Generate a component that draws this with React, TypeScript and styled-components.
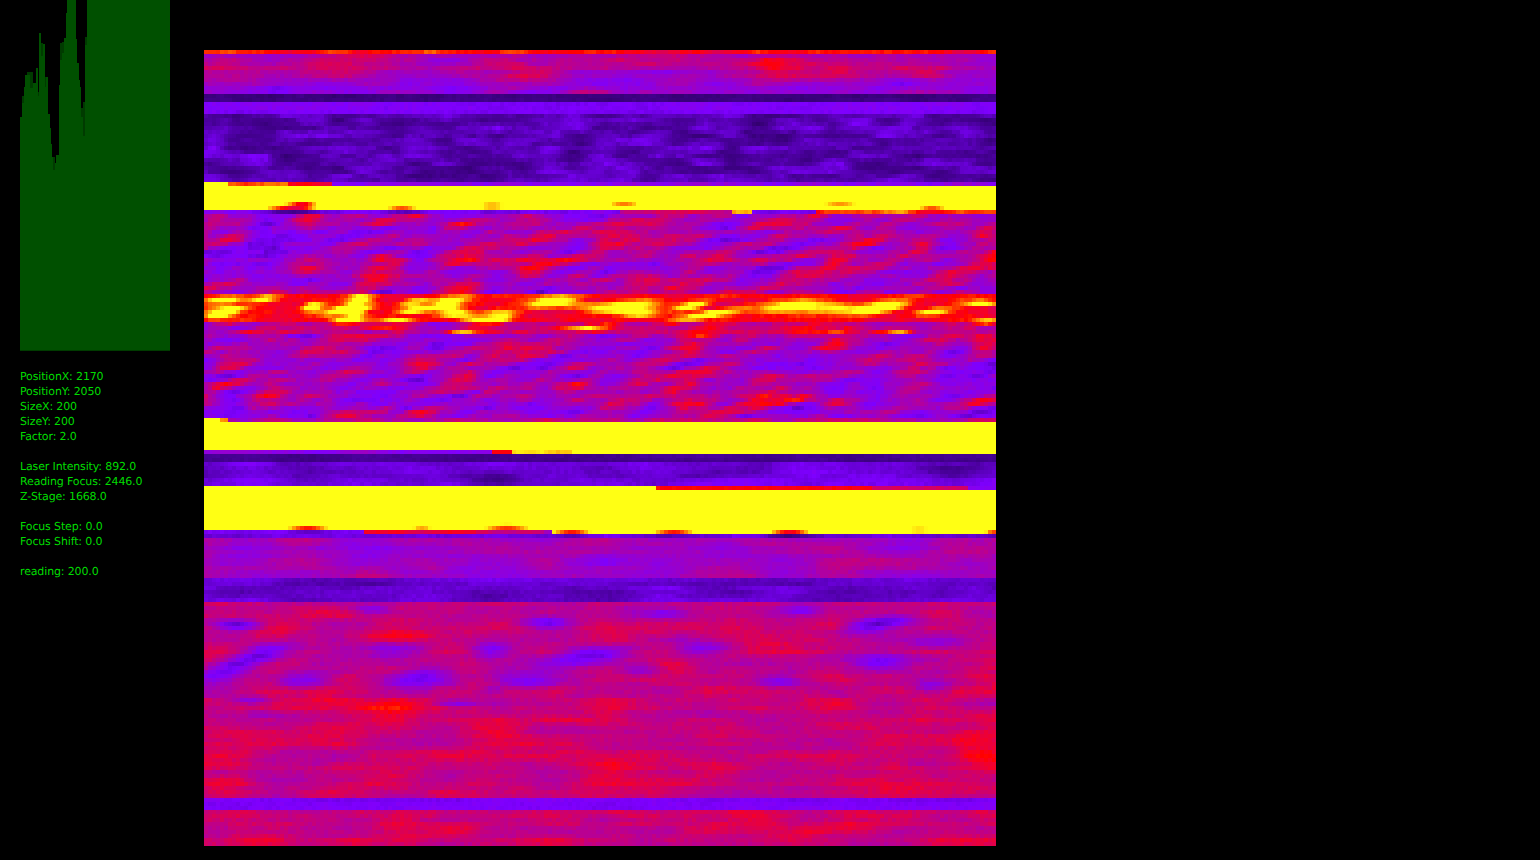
import React, { useEffect, useRef } from 'react';
import styled, { createGlobalStyle } from 'styled-components';

const GlobalStyle = createGlobalStyle`
  html, body {
    margin: 0;
    padding: 0;
    background: #000;
  }
`;

const Page = styled.div`
  display: flex;
  align-items: flex-start;
  width: 1540px;
  height: 860px;
  overflow: hidden;
  background: #000;
  padding-left: 20px;
  box-sizing: border-box;
`;

const SidePanel = styled.div`
  display: flex;
  flex-direction: column;
  width: 150px;
  flex: none;
`;

const Histogram = styled.svg`
  display: block;
  width: 150px;
  height: 351px;
`;

const Readout = styled.div`
  display: flex;
  flex-direction: column;
  gap: 15px;
  margin-top: 18px;
  font-family: 'DejaVu Sans', sans-serif;
  font-size: 11px;
  line-height: 15px;
  letter-spacing: -0.14px;
  text-rendering: geometricPrecision;
  color: #00dc00;
  white-space: nowrap;
`;

const ReadoutGroup = styled.div`
  display: flex;
  flex-direction: column;
`;

const ScanCanvas = styled.canvas`
  display: block;
  flex: none;
  width: 792px;
  height: 796px;
  margin: 50px 0 0 34px;
  image-rendering: pixelated;
`;

const readings = [
  ['PositionX: 2170', 'PositionY: 2050', 'SizeX: 200', 'SizeY: 200', 'Factor: 2.0'],
  ['Laser Intensity: 892.0', 'Reading Focus: 2446.0', 'Z-Stage: 1668.0'],
  ['Focus Step: 0.0', 'Focus Shift: 0.0'],
  ['reading: 200.0'],
];

// x0, x1, top, end of the darker part (page px, the panel starts at 20)
const histogramBars: number[][] = [
  [20, 22, 117], [22, 24, 96, 103], [24, 25, 87], [25, 27, 75], [27, 30, 72, 75],
  [30, 33, 72, 88], [33, 36, 83], [36, 38, 68], [38, 39, 92, 96], [39, 41, 33],
  [41, 43, 43, 56], [43, 45, 44], [45, 46, 77, 87], [46, 48, 77], [48, 50, 114],
  [50, 51, 128], [51, 52, 144], [52, 53, 157], [53, 55, 157, 170], [55, 56, 163],
  [56, 59, 155], [59, 60, 85], [60, 62, 43, 60], [62, 64, 42, 53], [64, 66, 38],
  [66, 67, 13], [67, 76, 0], [76, 77, 39], [77, 79, 63], [79, 80, 80], [80, 81, 87],
  [81, 83, 108, 117], [83, 85, 102, 136], [85, 87, 37, 45], [87, 170, 0],
];

type Band = { y0: number; y1: number; base: number; amp: number; sx: number; sy: number; slant?: number };
type Patch = { x0: number; x1: number; y0: number; y1: number; v: number; amp?: number };
// x, y, rx, ry, change, slant
type Blob = [number, number, number, number, number, number?];

const bands: Band[] = [
  { y0: 50, y1: 54, base: 0.72, amp: 0.09, sx: 30, sy: 8 },
  { y0: 54, y1: 70, base: 0.53, amp: 0.09, sx: 45, sy: 10 },
  { y0: 70, y1: 94, base: 0.48, amp: 0.09, sx: 45, sy: 10 },
  { y0: 94, y1: 102, base: 0.13, amp: 0.04, sx: 24, sy: 8 },
  { y0: 102, y1: 114, base: 0.37, amp: 0.03, sx: 50, sy: 8 },
  { y0: 114, y1: 182, base: 0.24, amp: 0.12, sx: 26, sy: 7 },
  { y0: 182, y1: 186, base: 0.42, amp: 0.05, sx: 30, sy: 8 },
  { y0: 186, y1: 210, base: 1.3, amp: 0, sx: 30, sy: 8 },
  { y0: 210, y1: 214, base: 0.4, amp: 0.08, sx: 30, sy: 8 },
  { y0: 214, y1: 294, base: 0.52, amp: 0.19, sx: 38, sy: 9, slant: 0.18 },
  { y0: 294, y1: 322, base: 0.7, amp: 0.08, sx: 40, sy: 8, slant: 0.18 },
  { y0: 322, y1: 334, base: 0.58, amp: 0.16, sx: 40, sy: 8, slant: 0.18 },
  { y0: 334, y1: 418, base: 0.52, amp: 0.19, sx: 38, sy: 9, slant: 0.18 },
  { y0: 418, y1: 422, base: 0.54, amp: 0.1, sx: 30, sy: 8 },
  { y0: 422, y1: 450, base: 1.3, amp: 0, sx: 30, sy: 8 },
  { y0: 450, y1: 454, base: 0.42, amp: 0.05, sx: 40, sy: 8 },
  { y0: 454, y1: 462, base: 0.17, amp: 0.04, sx: 40, sy: 8 },
  { y0: 462, y1: 486, base: 0.32, amp: 0.07, sx: 50, sy: 12 },
  { y0: 486, y1: 490, base: 0.4, amp: 0.04, sx: 40, sy: 8 },
  { y0: 490, y1: 530, base: 1.3, amp: 0, sx: 30, sy: 8 },
  { y0: 530, y1: 534, base: 0.38, amp: 0.03, sx: 40, sy: 8 },
  { y0: 534, y1: 538, base: 0.33, amp: 0.05, sx: 40, sy: 8 },
  { y0: 538, y1: 578, base: 0.5, amp: 0.08, sx: 60, sy: 14 },
  { y0: 578, y1: 600, base: 0.29, amp: 0.07, sx: 60, sy: 10 },
  { y0: 600, y1: 795, base: 0.6, amp: 0.07, sx: 55, sy: 13 },
  { y0: 795, y1: 808, base: 0.37, amp: 0.025, sx: 40, sy: 6 },
  { y0: 808, y1: 846, base: 0.62, amp: 0.07, sx: 50, sy: 12 },
];

const patches: Patch[] = [
  { x0: 204, x1: 228, y0: 182, y1: 186, v: 1.1 },
  { x0: 228, x1: 285, y0: 182, y1: 186, v: 0.8, amp: 0.08 },
  { x0: 285, x1: 330, y0: 182, y1: 186, v: 0.68, amp: 0.03 },
  { x0: 620, x1: 730, y0: 210, y1: 214, v: 0.62, amp: 0.05 },
  { x0: 730, x1: 750, y0: 210, y1: 214, v: 0.95, amp: 0.04 },
  { x0: 815, x1: 996, y0: 210, y1: 214, v: 0.82, amp: 0.12 },
  { x0: 204, x1: 220, y0: 418, y1: 422, v: 1.1 },
  { x0: 220, x1: 228, y0: 418, y1: 422, v: 0.88, amp: 0.03 },
  { x0: 490, x1: 512, y0: 450, y1: 454, v: 0.72 },
  { x0: 512, x1: 570, y0: 450, y1: 454, v: 0.95, amp: 0.06 },
  { x0: 570, x1: 996, y0: 450, y1: 454, v: 1.3 },
  { x0: 204, x1: 656, y0: 486, y1: 490, v: 1.3 },
  { x0: 656, x1: 870, y0: 486, y1: 490, v: 0.71, amp: 0.02 },
  { x0: 870, x1: 965, y0: 486, y1: 490, v: 0.61, amp: 0.02 },
  { x0: 364, x1: 550, y0: 530, y1: 534, v: 0.71, amp: 0.02 },
  { x0: 550, x1: 996, y0: 530, y1: 534, v: 1.3 },
];

const blobs: Blob[] = [
  // top band
  [320, 70, 32, 7, 0.15], [520, 72, 42, 7, 0.16], [800, 72, 65, 8, 0.17], [930, 72, 20, 7, 0.17],
  [780, 60, 70, 4, 0.1], [300, 88, 90, 5, -0.06], [880, 88, 70, 5, -0.08],
  // orange spots in the first yellow band
  [286, 206, 28, 4, -0.55], [302, 203, 16, 3, -0.5], [400, 205, 20, 4, -0.52], [490, 204, 22, 4, -0.48],
  [622, 203, 22, 4, -0.48], [838, 202, 26, 4, -0.42], [930, 205, 18, 4, -0.52],
  // hot streak
  [222, 298, 20, 3.5, 0.46, 0.1], [225, 308, 18, 3.5, 0.46, 0.1], [215, 314, 14, 3.5, 0.46, 0.1], [262, 297, 13, 3.5, 0.4, 0.1],
  [310, 305, 10, 5, 0.4, 0.2], [345, 308, 25, 4, 0.52, 0.12], [352, 307, 9, 8, 0.36], [345, 318, 16, 3.5, 0.52, 0.12],
  [360, 296, 11, 3, 0.46], [413, 300, 16, 3.5, 0.38, 0.1], [413, 308, 18, 3.5, 0.46, 0.1], [452, 297, 18, 3.5, 0.46, 0.1],
  [446, 304, 14, 3.5, 0.4], [456, 312, 16, 3.5, 0.42], [396, 319, 16, 3, 0.42], [486, 318, 22, 3, 0.44], [500, 312, 16, 3.5, 0.36],
  [550, 300, 22, 5, 0.46, 0.1], [585, 304, 30, 3, 0.28], [625, 305, 30, 6, 0.46, 0.1], [640, 312, 18, 3.5, 0.36],
  [690, 304, 16, 3.5, 0.44, 0.15], [705, 313, 26, 3.5, 0.44, 0.15], [790, 304, 30, 6, 0.46, 0.1], [835, 306, 26, 6, 0.3],
  [880, 305, 26, 6, 0.46, 0.15], [930, 310, 18, 3.5, 0.44, 0.1], [980, 301, 18, 3, 0.4], [985, 320, 14, 3, 0.4],
  [580, 326, 22, 3, 0.36], [460, 331, 16, 2.5, 0.36], [380, 325, 16, 2.5, 0.3], [900, 330, 16, 2.5, 0.28], [700, 333, 16, 2.5, 0.25],
  // dark parts of the violet band
  [480, 476, 35, 8, -0.12], [700, 472, 28, 8, -0.11], [950, 466, 30, 5, -0.1],
  // orange spots in the lower yellow band
  [306, 526, 26, 3, -0.55], [420, 526, 16, 3, -0.4], [505, 525, 30, 4, -0.55], [570, 530, 24, 3, -0.55],
  [672, 530, 26, 3, -0.55], [788, 530, 24, 4, -0.6], [917, 528, 24, 3, -0.52], [992, 530, 12, 3, -0.5],
  // violet spots and red clouds in the lower part
  [236, 623, 24, 5, -0.3], [258, 652, 30, 9, -0.21, 0.25], [223, 668, 32, 10, -0.23, 0.25], [303, 678, 28, 9, -0.22, 0.1],
  [389, 648, 30, 9, -0.2], [416, 677, 28, 9, -0.22, 0.1], [251, 698, 18, 4, -0.2], [453, 702, 18, 4, -0.2],
  [489, 648, 18, 9, -0.18], [489, 688, 12, 3, -0.18], [545, 621, 24, 6, -0.21], [875, 622, 36, 7, -0.26, 0.15],
  [660, 612, 20, 4, -0.17], [580, 655, 42, 9, -0.21, 0.15], [700, 645, 30, 8, -0.2], [640, 668, 18, 6, -0.17],
  [520, 680, 30, 9, -0.19], [880, 660, 30, 9, -0.2], [780, 680, 18, 6, -0.17], [935, 640, 30, 6, -0.19],
  [930, 685, 18, 6, -0.17], [370, 607, 18, 5, -0.19], [800, 608, 18, 5, -0.19],
  [400, 633, 40, 5, 0.1], [386, 710, 34, 12, 0.09], [219, 763, 30, 4, 0.11], [980, 750, 40, 15, 0.08],
  [640, 760, 60, 12, 0.05], [290, 775, 40, 15, -0.05],
];

const colorStops: [number, number, number, number][] = [
  [0, 36, 0, 84],
  [0.22, 76, 0, 160],
  [0.38, 126, 0, 255],
  [0.5, 160, 0, 190],
  [0.6, 200, 0, 120],
  [0.7, 250, 0, 30],
  [0.73, 255, 0, 0],
  [0.86, 255, 130, 0],
  [1, 255, 255, 20],
];

const colorAt = (v: number): string => {
  const t = Math.max(0, Math.min(1, v));
  for (let i = 1; i < colorStops.length; i++) {
    const a = colorStops[i - 1];
    const b = colorStops[i];
    if (t <= b[0]) {
      const f = (t - a[0]) / (b[0] - a[0]);
      return `rgb(${Math.round(a[1] + (b[1] - a[1]) * f)},${Math.round(a[2] + (b[2] - a[2]) * f)},${Math.round(a[3] + (b[3] - a[3]) * f)})`;
    }
  }
  return 'rgb(255,255,20)';
};

const hash = (i: number, j: number) => {
  const s = Math.sin(i * 127.1 + j * 311.7) * 43758.5453;
  return s - Math.floor(s);
};

const smoothNoise = (x: number, y: number) => {
  const ix = Math.floor(x);
  const iy = Math.floor(y);
  const fx = x - ix;
  const fy = y - iy;
  const ux = fx * fx * (3 - 2 * fx);
  const uy = fy * fy * (3 - 2 * fy);
  const top = hash(ix, iy) * (1 - ux) + hash(ix + 1, iy) * ux;
  const bottom = hash(ix, iy + 1) * (1 - ux) + hash(ix + 1, iy + 1) * ux;
  return top * (1 - uy) + bottom * uy;
};

const fractalNoise = (x: number, y: number) =>
  (smoothNoise(x, y) * 0.6 + smoothNoise(x * 2.1 + 9, y * 2.1 + 4) * 0.28 + smoothNoise(x * 4.3 + 3, y * 4.3 + 8) * 0.12 - 0.5) * 2;

const scanValue = (x: number, y: number) => {
  const band = bands.find((b) => y >= b.y0 && y < b.y1) ?? bands[bands.length - 1];
  let base = band.base;
  let amp = band.amp;
  for (const p of patches) {
    if (y >= p.y0 && y < p.y1 && x >= p.x0 && x < p.x1) {
      base = p.v;
      amp = p.amp ?? 0;
    }
  }
  const slant = band.slant ?? 0;
  let v = base + amp * 1.5 * fractalNoise(x / band.sx, (y + slant * x) / band.sy);
  if (amp > 0) v += (hash(x, y) - 0.5) * 0.04 + (hash(7, y) - 0.5) * 0.03;
  for (const [bx, by, rx, ry, dv, s] of blobs) {
    const dx = (x - bx) / rx;
    const dy = (y - by + (s ?? 0) * (x - bx)) / ry;
    const d = dx * dx + dy * dy;
    if (d < 6) v += dv * Math.exp(-d);
  }
  return v;
};

const ScanImage: React.FC = () => {
  const ref = useRef<HTMLCanvasElement>(null);

  useEffect(() => {
    const ctx = ref.current?.getContext('2d');
    if (!ctx) return;
    for (let row = 0; row < 199; row++) {
      for (let col = 0; col < 198; col++) {
        ctx.fillStyle = colorAt(scanValue(204 + col * 4, 50 + row * 4));
        ctx.fillRect(col * 4, row * 4, 4, 4);
      }
    }
  }, []);

  return <ScanCanvas ref={ref} width={792} height={796} />;
};

const App: React.FC = () => (
  <>
    <GlobalStyle />
    <Page>
      <SidePanel>
        <Histogram viewBox="20 0 150 351" shapeRendering="crispEdges">
          {histogramBars.map(([x0, x1, top, dark]) => (
            <g key={x0}>
              {dark !== undefined && <rect x={x0} y={top} width={x1 - x0} height={dark - top} fill="#003b00" />}
              <rect x={x0} y={dark ?? top} width={x1 - x0} height={350 - (dark ?? top)} fill="#005000" />
            </g>
          ))}
          <rect x={20} y={350} width={150} height={1} fill="#003b00" />
        </Histogram>
        <Readout>
          {readings.map((group) => (
            <ReadoutGroup key={group[0]}>
              {group.map((line) => (
                <span key={line}>{line}</span>
              ))}
            </ReadoutGroup>
          ))}
        </Readout>
      </SidePanel>
      <ScanImage />
    </Page>
  </>
);

export default App;
